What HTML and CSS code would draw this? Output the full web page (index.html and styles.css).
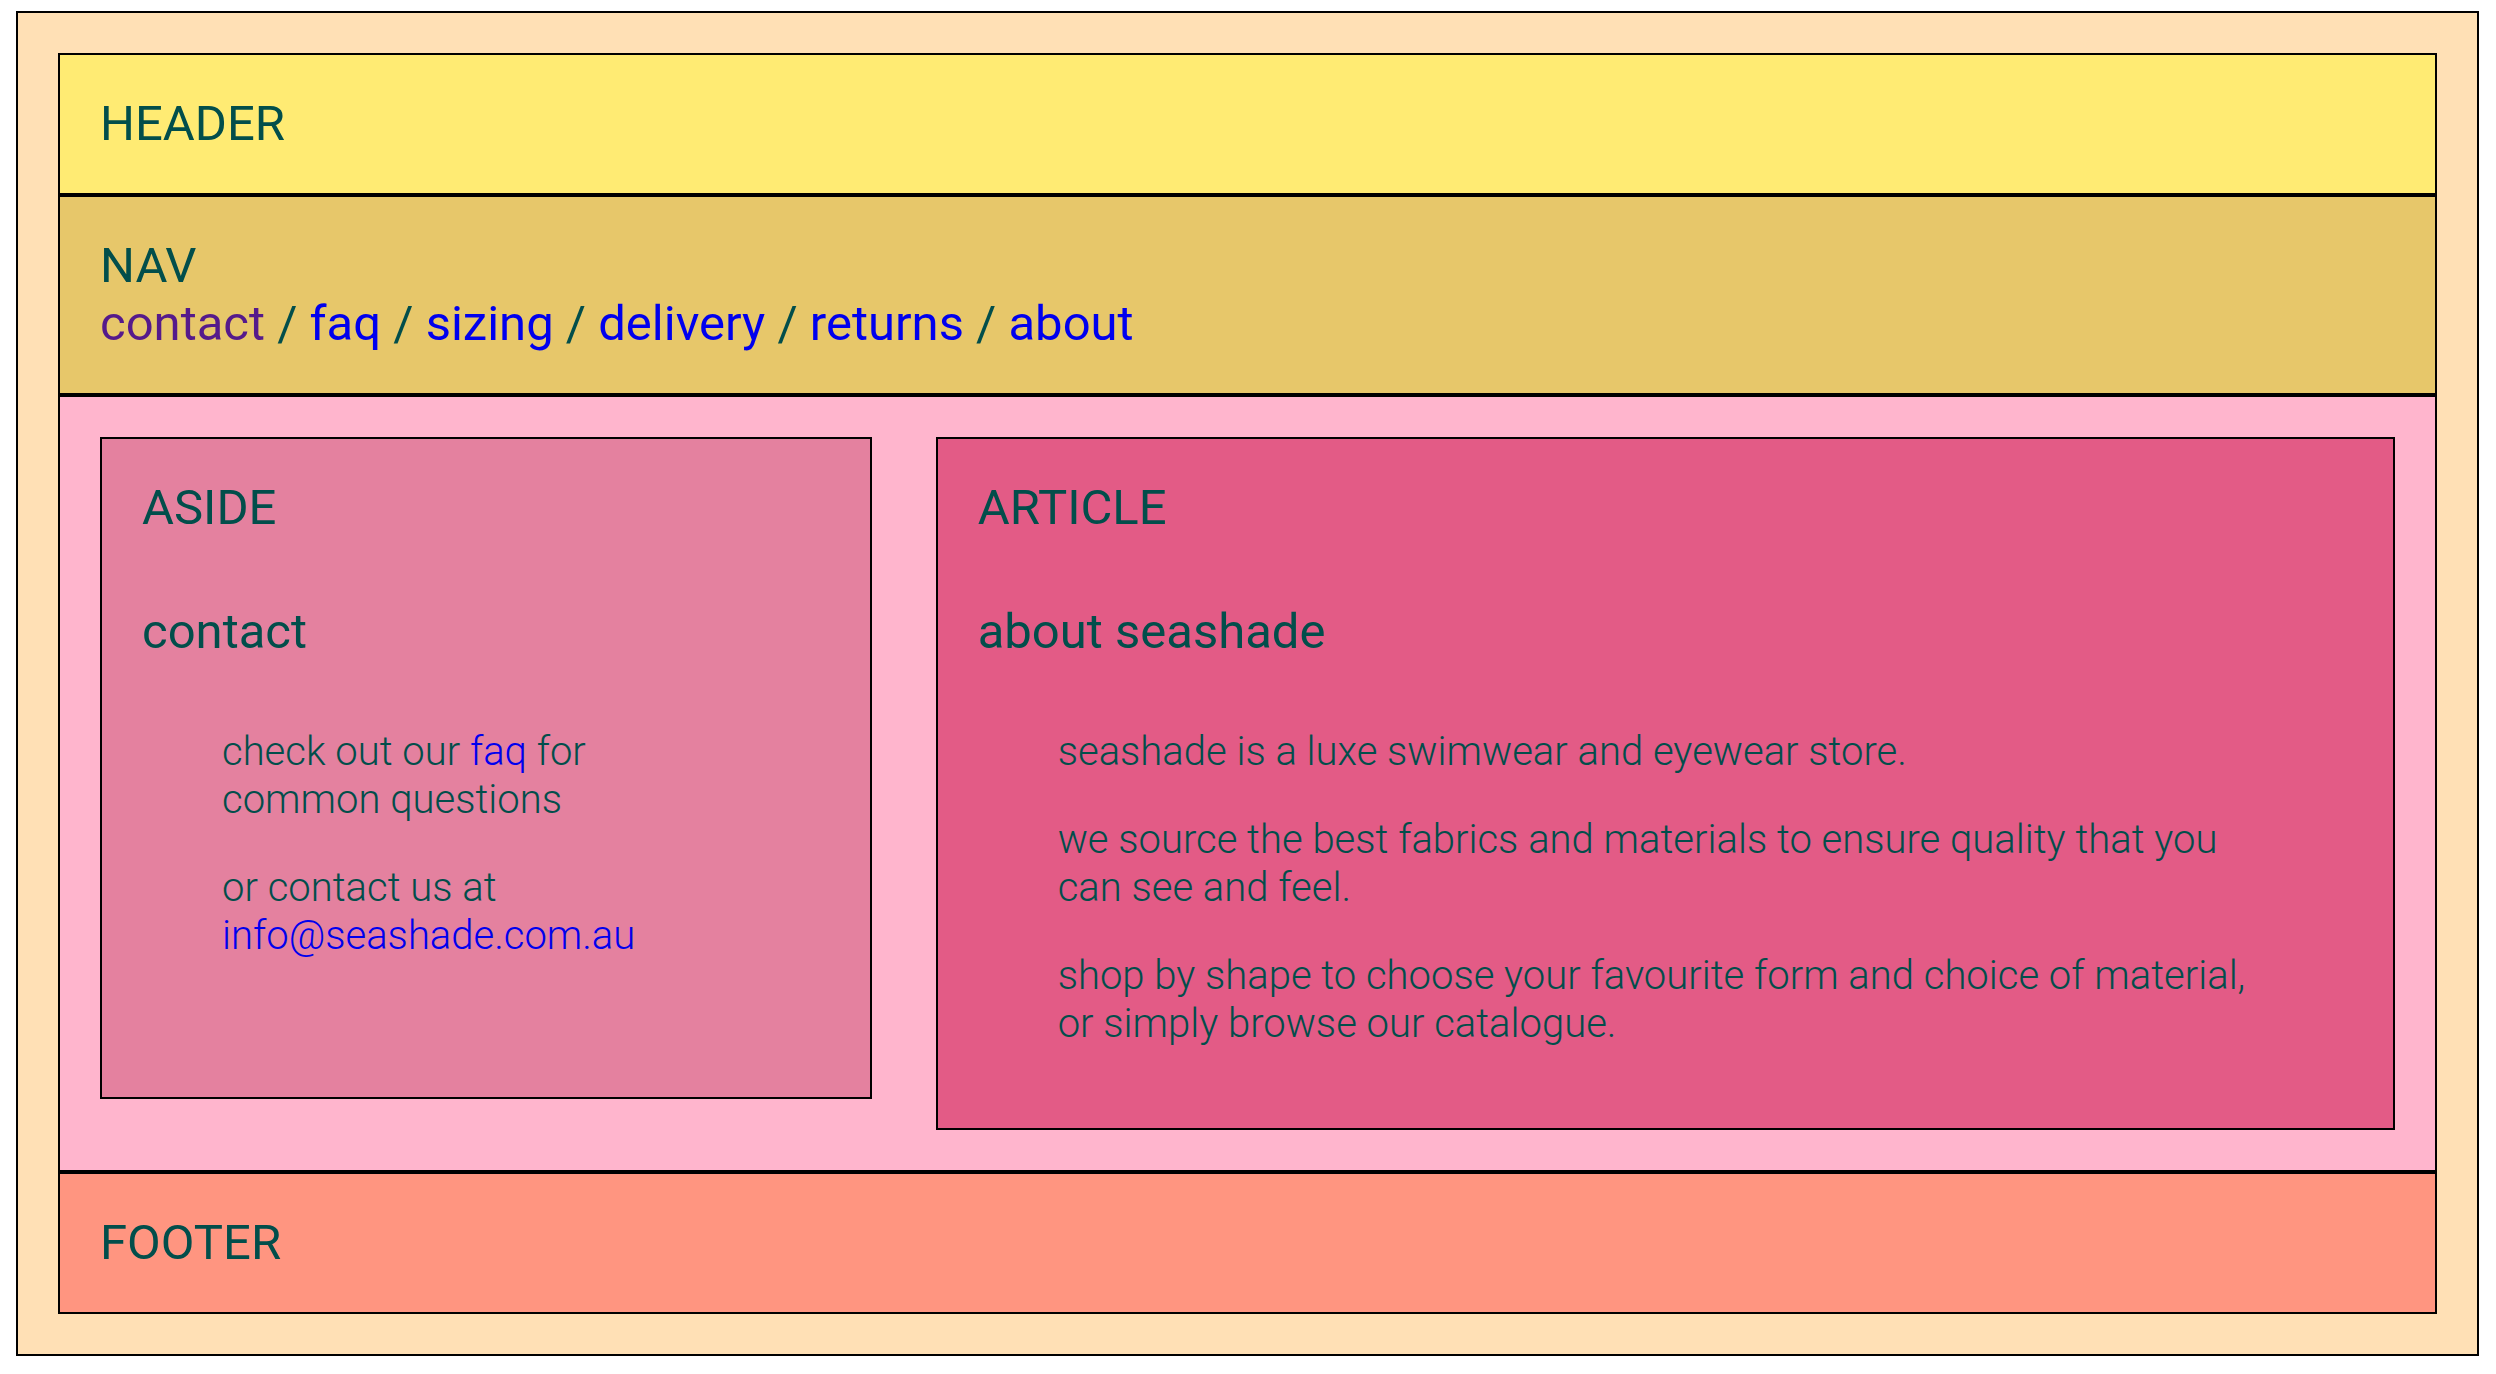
FILE: index.html
```html
<!DOCTYPE html>
<html lang="en">
<head>
    <meta charset="UTF-8">
    <meta name="viewport" content="width=device-width, initial-scale=1.0">
    <title>seashade</title>
    <link rel="stylesheet" href="styles.css">
</head>
<body>
    <div class="page">
        <!-- Header -->
        <header class="block header">HEADER</header>

        <!-- Nav -->
        <nav class="block nav">
            <div>NAV</div>
            <div>
                <a href="#contact" class="visited">contact</a> / <a href="#faq">faq</a> / <a href="#sizing">sizing</a> / <a href="#delivery">delivery</a> / <a href="#returns">returns</a> / <a href="#about">about</a>
            </div>
        </nav>

        <!-- Main -->
        <main class="block main">
            <aside class="box aside">
                <div>ASIDE</div>
                <h2 class="title">contact</h2>
                <div class="copy">
                    <p>check out our <a href="#faq">faq</a> for common questions</p>
                    <p>or contact us at <a href="#mail">info@seashade.com.au</a></p>
                </div>
            </aside>

            <article class="box article">
                <div>ARTICLE</div>
                <h2 class="title">about seashade</h2>
                <div class="copy">
                    <p>seashade is a luxe swimwear and eyewear store.</p>
                    <p>we source the best fabrics and materials to ensure quality that you can see and feel.</p>
                    <p>shop by shape to choose your favourite form and choice of material, or simply browse our catalogue.</p>
                </div>
            </article>
        </main>

        <!-- Footer -->
        <footer class="block footer">FOOTER</footer>
    </div>
</body>
</html>
```

FILE: styles.css
```css
body {
    margin: 11px 17px 0 16px;
    font-family: Roboto, "Liberation Sans", sans-serif;
    font-size: 49px;
    line-height: 58px;
    color: #024e4b;
    background-color: #fff;
}
.page {
    border: 2px solid #000;
    padding: 40px;
    background-color: #ffe0b5;
}
.block {
    border: 2px solid #000;
    padding: 40px;
}
.header {
    background-color: #ffeb73;
}
.nav {
    background-color: #e7c76a;
}
.main {
    display: flex;
    align-items: flex-start;
    gap: 64px;
    background-color: #ffb5cd;
}
.footer {
    background-color: #ff9580;
}
a {
    color: #0000ee;
    text-decoration: none;
}
a.visited {
    color: #551a8b;
}
.box {
    border: 2px solid #000;
    padding: 40px;
}
.aside {
    flex: 1;
    padding-bottom: 97px;
    background-color: #e4819f;
}
.article {
    flex: 2;
    background-color: #e35b86;
}
.title {
    font-size: 49px;
    font-weight: 400;
    line-height: 58px;
    margin: 66px 0 67px;
}
.copy {
    margin: 0 80px;
    font-size: 40px;
    font-weight: 300;
    line-height: 48px;
}
.copy p {
    margin: 0 0 40px;
}
```
